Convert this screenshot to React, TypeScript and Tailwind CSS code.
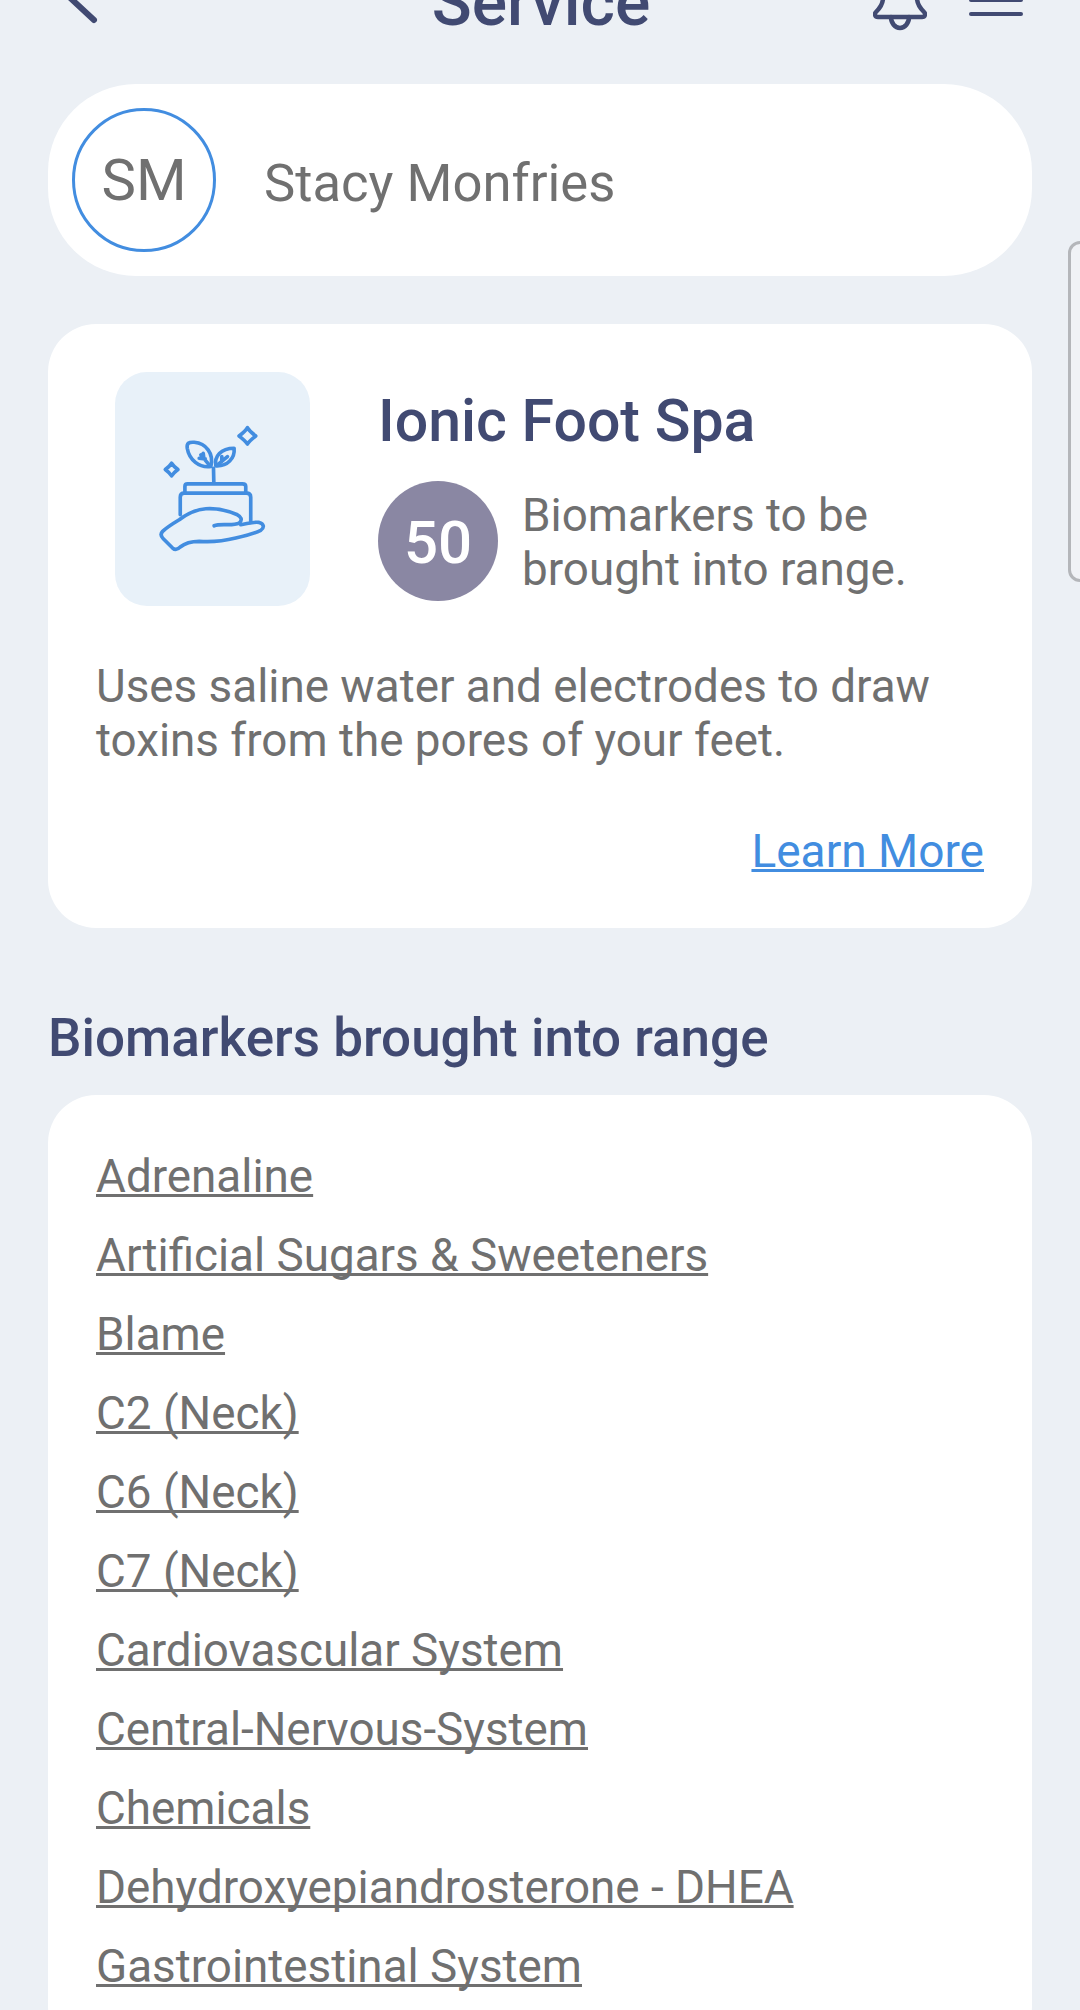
const biomarkers = [
  "Adrenaline",
  "Artificial Sugars & Sweeteners",
  "Blame",
  "C2 (Neck)",
  "C6 (Neck)",
  "C7 (Neck)",
  "Cardiovascular System",
  "Central-Nervous-System",
  "Chemicals",
  "Dehydroxyepiandrosterone - DHEA",
  "Gastrointestinal System",
];

function PlantHandIcon() {
  return (
    <svg viewBox="180 195 320 385" className="h-[128px] w-[107px]" fill="none" stroke="#428de0" strokeWidth="11" strokeLinecap="round" strokeLinejoin="round">
      <path d="M445 203C452 214 460 220 470 228C460 236 452 242 445 252C438 242 430 236 420 228C430 220 438 214 445 203Z" />
      <path d="M217 310C222 318 228 323 236 329C228 335 222 340 217 348C212 340 206 335 198 329C206 323 212 318 217 310Z" />
      <path d="M335 320C300 325 270 300 264 265C262 250 268 246 285 247C320 250 345 280 335 320Z" />
      <path d="M305 285L330 315M300 295L318 297M312 280L314 295" />
      <path d="M350 318C345 290 365 265 405 265C408 295 385 320 350 318Z" />
      <path d="M355 315L385 290M368 290V305" />
      <path d="M343 325L344 370" />
      <path d="M257 398V380Q257 372 265 372H430Q440 372 440 380V398" />
      <path d="M243 465V412Q243 400 255 400H442Q455 400 455 412V488" />
      <path d="M345 498C365 490 400 500 420 490C432 480 425 470 415 465C385 452 350 445 320 447C285 450 260 465 240 480C220 492 200 505 190 515C183 522 185 530 192 537L220 565C228 572 235 570 243 562C260 548 280 545 300 545C340 548 370 545 410 535C440 528 465 522 485 512C497 503 495 492 480 488C465 485 445 492 425 495" />
    </svg>
  );
}

export default function App() {
  return (
    <div className="relative h-[2010px] w-[1080px] overflow-hidden bg-[#ecf0f5] font-['Roboto',sans-serif]">
      <header className="grid h-[84px] grid-cols-[1fr_auto_1fr] items-start px-[57px]">
        <svg viewBox="0 0 40 26" className="ml-[7px] h-[26px] w-[40px]" fill="none" stroke="#414a72" strokeWidth="6" strokeLinecap="round">
          <path d="M2 -6 30 20" />
        </svg>
        <h1 className="ml-[2px] -mt-[35px] text-[66px] font-medium leading-[76px] text-[#414a72]">Service</h1>
        <div className="flex items-start justify-end gap-[42px]">
          <svg viewBox="0 0 54 34" className="h-[34px] w-[54px]" fill="none" stroke="#414a72" strokeWidth="4.5" strokeLinecap="round" strokeLinejoin="round">
            <path d="M10 -4V-2C10 4 7 8 3 12C1 14 2 17 5 17H49C52 17 53 14 51 12C47 8 44 4 44 -2V-4" />
            <path d="M18 17C18 23 22 28 27 28S36 23 36 17" />
          </svg>
          <div className="-mt-[2px] flex w-[54px] flex-col gap-[10px]">
            <span className="h-[4px] rounded-full bg-[#414a72]" />
            <span className="h-[4px] rounded-full bg-[#414a72]" />
          </div>
        </div>
      </header>

      <main className="flex flex-col px-[48px]">
        <section className="flex h-[192px] items-center rounded-[88px] bg-white pl-[24px]">
          <div className="flex h-[144px] w-[144px] items-center justify-center rounded-full border-[3px] border-[#428de0] text-[58px] leading-none text-[#707070]">
            SM
          </div>
          <p className="ml-[48px] mt-[6px] text-[52.6px] leading-none text-[#707070]">Stacy Monfries</p>
        </section>

        <section className="mt-[48px] rounded-[48px] bg-white p-[48px] pb-[50px]">
          <div className="flex">
            <div className="ml-[19px] flex h-[234px] w-[195px] shrink-0 items-center justify-center rounded-[32px] bg-[#e8f1f9]">
              <PlantHandIcon />
            </div>
            <div className="ml-[68px] mt-[16px]">
              <h2 className="text-[59px] font-medium leading-[66px] text-[#414a72]">Ionic Foot Spa</h2>
              <div className="mt-[27px] flex items-center">
                <div className="flex h-[120px] w-[120px] items-center justify-center rounded-full bg-[#8a87a3] pt-[4px] text-[60px] font-medium text-white">
                  50
                </div>
                <p className="ml-[24px] mt-[4px] text-[45.8px] leading-[54px] text-[#707070]">
                  Biomarkers to be
                  <br />
                  brought into range.
                </p>
              </div>
            </div>
          </div>
          <p className="mt-[54px] text-[45.8px] leading-[54px] text-[#707070]">
            Uses saline water and electrodes to draw
            <br />
            toxins from the pores of your feet.
          </p>
          <div className="mt-[56px] text-right">
            <a className="text-[46px] leading-[54px] text-[#428de0] underline decoration-[3px] [text-decoration-skip-ink:none]">Learn More</a>
          </div>
        </section>

        <h2 className="mt-[80px] text-[53px] font-medium leading-[60px] text-[#414a72]">Biomarkers brought into range</h2>

        <section className="mt-[27px] rounded-[48px] bg-white px-[48px] pb-[48px] pt-[42px]">
          <ul className="flex flex-col">
            {biomarkers.map((name) => (
              <li key={name} className="h-[79px] text-[45.8px] leading-[79px] text-[#707070] underline decoration-[3px] [text-decoration-skip-ink:none]">
                {name}
              </li>
            ))}
          </ul>
        </section>
      </main>

      <div className="absolute right-[-20px] top-[241px] h-[341px] w-[32px] rounded-[12px] border-[3px] border-[#b4b6ba] bg-[#f0f2f6]" />
    </div>
  );
}
